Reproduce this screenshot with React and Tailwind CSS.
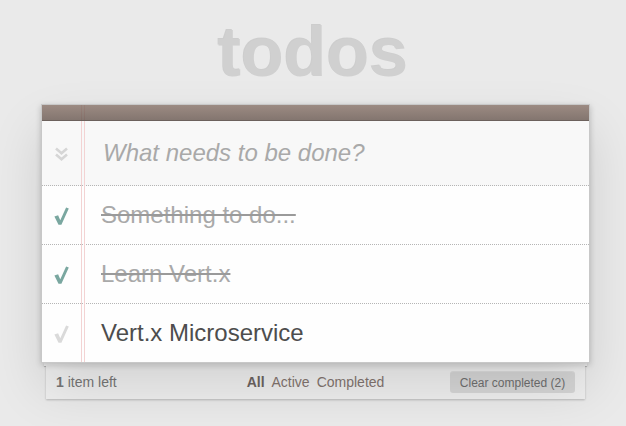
import React from "react";

const todos = [
  { text: "Something to do...", done: true },
  { text: "Learn Vert.x", done: true },
  { text: "Vert.x Microservice", done: false },
];

function Chevrons() {
  return (
    <svg width="13" height="14" viewBox="0 0 13 14" fill="none">
      <polyline points="1,1.5 6.5,6.2 12,1.5" stroke="#d6d6d6" strokeWidth="2.6" />
      <polyline points="1,7.5 6.5,12.2 12,7.5" stroke="#d6d6d6" strokeWidth="2.6" />
    </svg>
  );
}

function Check({ color }) {
  return (
    <svg width="15" height="18" viewBox="0 0 15 18">
      <path d="M0.4 9.6 L4.1 8.2 L6.3 13.2 L12.1 0.4 L14.8 1.5 L7.4 17.7 L4.5 17.7 Z" fill={color} />
    </svg>
  );
}

export default function App() {
  return (
    <div className="min-h-[426px] w-full bg-[#eaeaea] font-['Liberation_Sans',Arial,sans-serif] overflow-hidden">
      <h1 className="pt-[17px] h-[87px] text-center text-[70px] leading-[70px] font-bold text-[#d0d0d0] [text-shadow:-1px_-1px_0_rgba(0,0,0,0.12)]">
        todos
      </h1>
      <div className="mt-[17px] ml-[41px] w-[549px]">
        <div className="relative border border-[#c8c8c8] bg-[rgba(255,255,255,0.9)] shadow-[0_2px_6px_0_rgba(0,0,0,0.2),0_25px_50px_0_rgba(0,0,0,0.12)]">
          <div className="absolute top-0 bottom-0 left-[39px] w-[4px] border-x border-[#f3d3d3] z-10" />
          <div className="relative z-20 h-[16px] border-b border-[#6c615c] bg-[linear-gradient(to_bottom,rgba(132,110,100,0.8),rgba(101,84,76,0.8))]" />
          <div className="flex h-[65px] items-center border-b border-dotted border-[#b5b5b5] bg-[#f8f8f8]">
            <div className="flex w-[39px] justify-center pt-[1px]">
              <Chevrons />
            </div>
            <div className="ml-[22px] text-[24px] italic text-[#a9a9a9]">What needs to be done?</div>
          </div>
          {todos.map((t, i) => (
            <div
              key={i}
              className={
                i < todos.length - 1
                  ? "flex h-[59px] items-center border-b border-dotted border-[#b5b5b5] bg-[#fefefe]"
                  : "flex h-[58px] items-center bg-[#fefefe]"
              }
            >
              <div className="flex w-[39px] justify-center pt-[2px]">
                <Check color={t.done ? "#7aa7a0" : "#dadada"} />
              </div>
              <div
                className={
                  t.done
                    ? "ml-[20px] text-[24px] text-[#a9a9a9] line-through decoration-[#9a9a9a]"
                    : "ml-[20px] text-[24px] text-[#4d4d4d]"
                }
              >
                {t.text}
              </div>
            </div>
          ))}
        </div>
        <div className="mx-[3px] h-[3px] bg-[#f6f6f6] shadow-[0_1px_1px_rgba(0,0,0,0.25)]" />
        <div className="mx-[5px] flex h-[33px] items-center justify-between bg-[#efefef] px-[10px] text-[14px] text-[#777] shadow-[0_1px_2px_rgba(0,0,0,0.22)]">
          <div className="w-[125px]">
            <span className="font-bold">1</span> item left
          </div>
          <div className="flex gap-[7px] text-[#83756f]">
            <span className="font-bold text-[#6d6461]">All</span>
            <span>Active</span>
            <span>Completed</span>
          </div>
          <div className="w-[125px] h-[21px] flex items-center justify-center rounded-[3px] bg-[rgba(0,0,0,0.1)] text-[12px] text-[#6f6f6f] shadow-[0_-1px_0_0_rgba(0,0,0,0.08)]">
            Clear completed (2)
          </div>
        </div>
      </div>
    </div>
  );
}
